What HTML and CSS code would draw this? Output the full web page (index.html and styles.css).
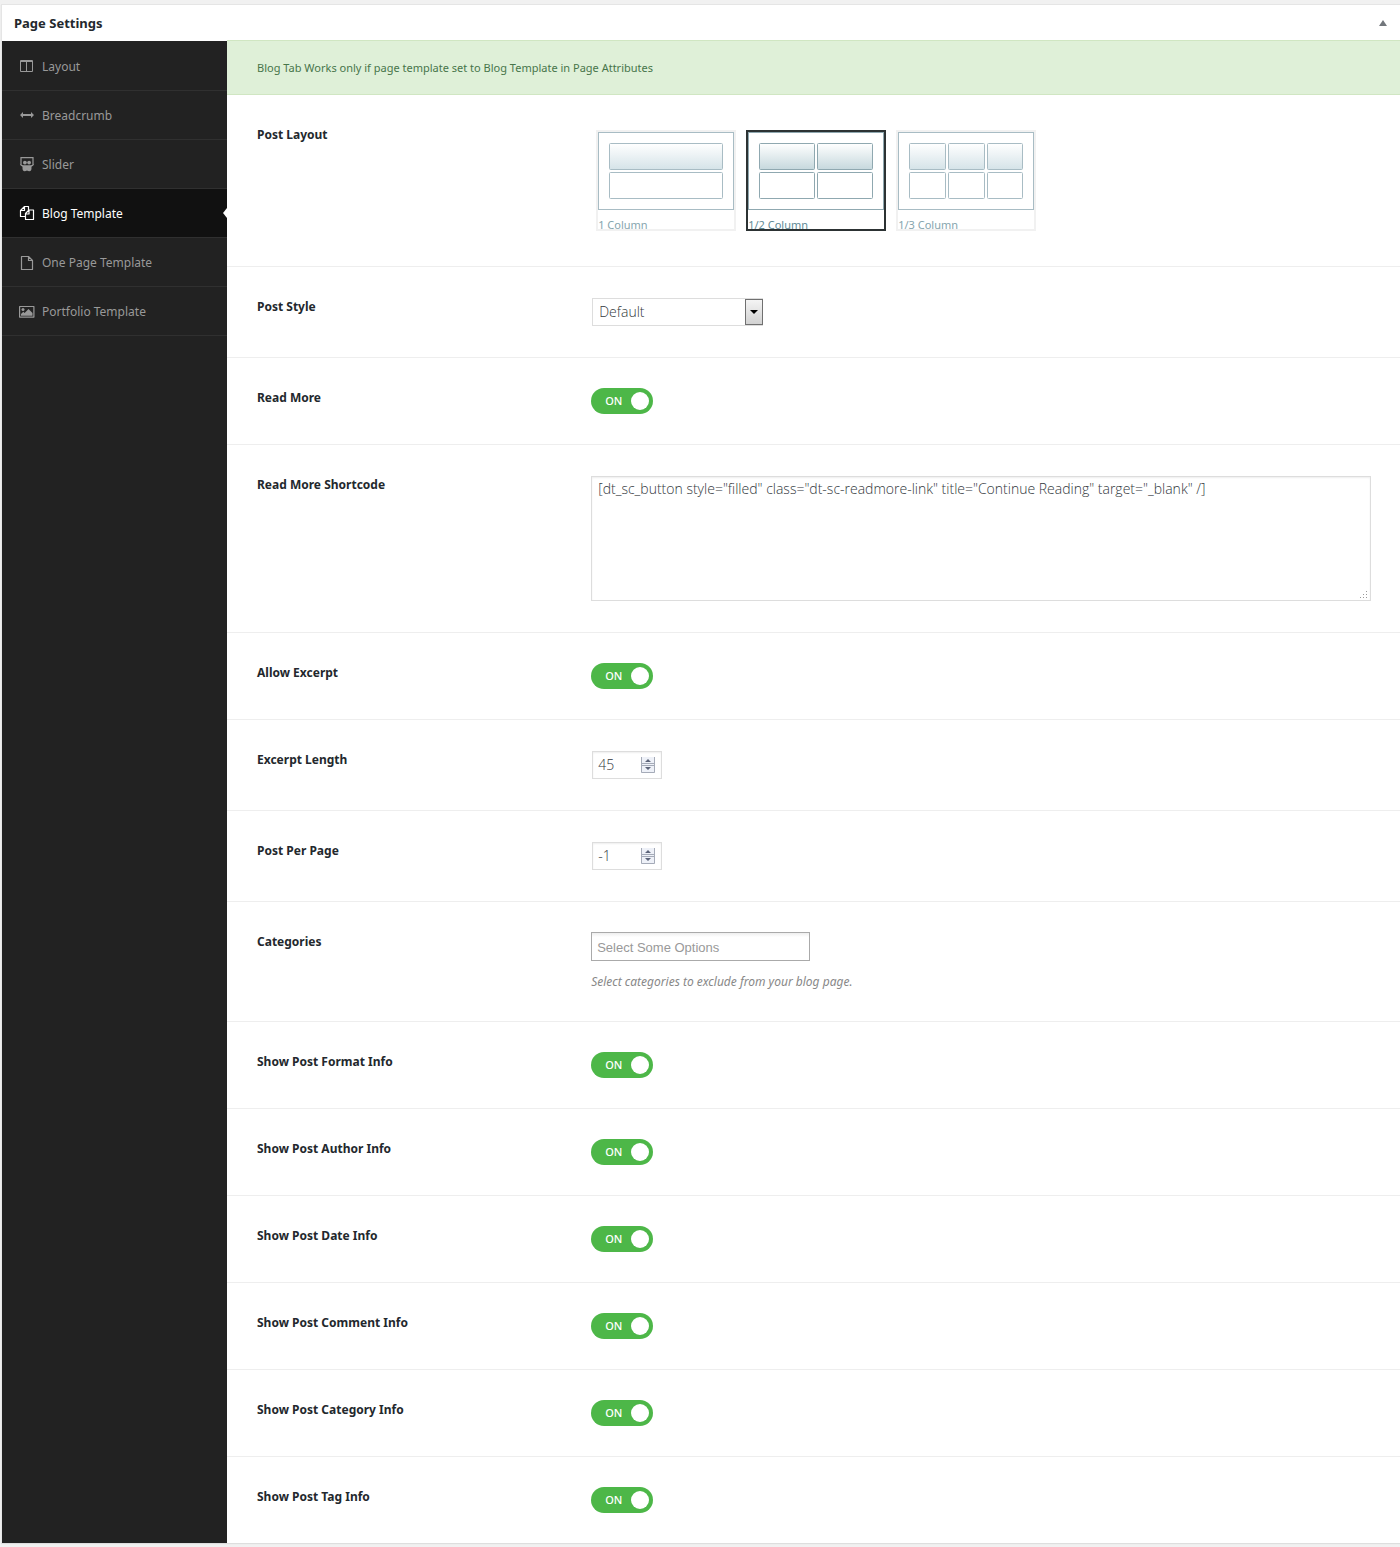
FILE: index.html
```html
<!DOCTYPE html>
<html lang="en">
<head>
<meta charset="utf-8">
<meta name="viewport" content="width=device-width, initial-scale=1">
<title>Page Settings</title>
<link rel="stylesheet" href="styles.css">
</head>
<body>
<main class="panel">
  <header class="panel-header">
    <h1 class="panel-title">Page Settings</h1>
    <button class="panel-collapse" type="button" aria-label="Collapse panel">
      <svg width="8" height="6" viewBox="0 0 8 6" aria-hidden="true"><path d="M4 0 8 6H0z" fill="#72777c"/></svg>
    </button>
  </header>
  <div class="panel-body">
    <nav class="tabs" aria-label="Settings sections">
      <a class="tab" href="#layout">
        <svg class="tab-icon" viewBox="0 0 16 16" aria-hidden="true"><path fill="currentColor" fill-rule="evenodd" d="M2 2h11q1 0 1 1v10q0 1-1 1H2q-1 0-1-1V3q0-1 1-1zm0 2v9h5V4zm6 0v9h5V4z"/></svg>
        Layout
      </a>
      <a class="tab" href="#breadcrumb">
        <svg class="tab-icon" viewBox="0 0 16 16" aria-hidden="true"><path fill="currentColor" d="M1 8l3-3v2h8V5l3 3-3 3V9H4v2z"/></svg>
        Breadcrumb
      </a>
      <a class="tab" href="#slider">
        <svg class="tab-icon" viewBox="0 0 16 16" aria-hidden="true"><path fill="none" stroke="currentColor" stroke-width="1.200" d="M2 9V1.600h12V9"/><circle cx="5.900" cy="6.600" r="1.900" fill="currentColor"/><circle cx="10.100" cy="6.600" r="1.900" fill="currentColor"/><path fill="currentColor" d="M.8 7.700q1.500 1.600 6 1.600H8h1.200q4.500 0 6-1.600-.4 1.900-2.700 3 .3 4.600-2.200 4.600-1.300 0-2.300-.7-1 .7-2.300.7-2.500 0-2.200-4.600Q1.200 9.600.8 7.700z"/></svg>
        Slider
      </a>
      <a class="tab tab-active" href="#blog" aria-current="page">
        <svg class="tab-icon" viewBox="0 0 16 16" aria-hidden="true"><path fill="none" stroke="currentColor" stroke-width="1.200" stroke-linejoin="round" d="M6.500 11.500h-5V5.500l4-4h4V5M1.500 5.500h4v-4M10 5h4.500v9.500h-8V8.500L10 5v4H6.500"/></svg>
        Blog Template
      </a>
      <a class="tab" href="#onepage">
        <svg class="tab-icon" viewBox="0 0 16 16" aria-hidden="true"><path fill="none" stroke="currentColor" stroke-width="1.200" stroke-linejoin="round" d="M2.500 2.500h7l4 4v9h-11zM9.500 2.500v4h4"/></svg>
        One Page Template
      </a>
      <a class="tab" href="#portfolio">
        <svg class="tab-icon" viewBox="0 0 16 16" aria-hidden="true"><path fill="none" stroke="currentColor" stroke-width="1.200" stroke-linejoin="round" d="M.6 3.500h14.300v10.600H.6z"/><circle cx="4" cy="6.600" r="1.500" fill="currentColor"/><path fill="currentColor" d="M2 12.800v-1.900l2.300-2.200 1.300 1.200L9.500 6l4 4v2.800z"/></svg>
        Portfolio Template
      </a>
    </nav>

    <form class="settings">
      <p class="notice">Blog Tab Works only if page template set to Blog Template in Page Attributes</p>

      <div class="row">
        <span class="label" id="post-layout-label">Post Layout</span>
        <div class="layouts" role="radiogroup" aria-labelledby="post-layout-label">
          <label class="layout">
            <input class="cover-input" type="radio" name="post-layout">
            <svg class="layout-picture" viewBox="0 0 136 78" aria-hidden="true">
              <defs><linearGradient id="shade" x1="0" y1="0" x2="0" y2="1"><stop offset="0" stop-color="#fff"/><stop offset="1" stop-color="#d5e3e8"/></linearGradient></defs>
              <g fill="none" stroke="#a8bcc4"><rect x=".5" y=".5" width="135" height="77"/><rect x="11.500" y="11.500" width="113" height="26" rx="1" fill="url(#shade)"/><rect x="11.500" y="40.500" width="113" height="26" rx="1"/></g>
            </svg>
            <span class="layout-name">1 Column</span>
          </label>
          <label class="layout">
            <input class="cover-input" type="radio" name="post-layout" checked>
            <svg class="layout-picture" viewBox="0 0 136 78" aria-hidden="true">
              <defs><linearGradient id="shade-selected" x1="0" y1="0" x2="0" y2="1"><stop offset="0" stop-color="#fff"/><stop offset="1" stop-color="#c6d8dd"/></linearGradient></defs>
              <g fill="none" stroke="#8fa8b0"><rect x=".5" y=".5" width="135" height="77"/><g fill="url(#shade-selected)"><rect x="11.500" y="11.500" width="55" height="26" rx="1"/><rect x="69.500" y="11.500" width="55" height="26" rx="1"/></g><rect x="11.500" y="40.500" width="55" height="26" rx="1"/><rect x="69.500" y="40.500" width="55" height="26" rx="1"/></g>
            </svg>
            <span class="layout-name">1/2 Column</span>
          </label>
          <label class="layout">
            <input class="cover-input" type="radio" name="post-layout">
            <svg class="layout-picture" viewBox="0 0 136 78" aria-hidden="true">
              <g fill="none" stroke="#a8bcc4"><rect x=".5" y=".5" width="135" height="77"/><g fill="url(#shade)"><rect x="11.500" y="11.500" width="36" height="26" rx="1"/><rect x="50.500" y="11.500" width="36" height="26" rx="1"/><rect x="89.500" y="11.500" width="35" height="26" rx="1"/></g><rect x="11.500" y="40.500" width="36" height="26" rx="1"/><rect x="50.500" y="40.500" width="36" height="26" rx="1"/><rect x="89.500" y="40.500" width="35" height="26" rx="1"/></g>
            </svg>
            <span class="layout-name">1/3 Column</span>
          </label>
        </div>
      </div>

      <div class="row">
        <label class="label" for="post-style">Post Style</label>
        <div class="field">
          <div class="select">
            <select class="select-input" id="post-style"><option>Default</option></select>
            <span class="select-arrow" aria-hidden="true"><svg width="8" height="4" viewBox="0 0 8 4"><path d="M0 0h8L4 4z"/></svg></span>
          </div>
        </div>
      </div>

      <div class="row">
        <label class="label" for="read-more">Read More</label>
        <div class="toggle"><input class="cover-input" id="read-more" type="checkbox" role="switch" checked><span class="toggle-text">ON</span><span class="toggle-knob"></span></div>
      </div>

      <div class="row">
        <label class="label" for="shortcode">Read More Shortcode</label>
        <div class="field textarea">
          <textarea class="textarea-input" id="shortcode">[dt_sc_button style="filled" class="dt-sc-readmore-link" title="Continue Reading" target="_blank" /]</textarea>
          <svg class="textarea-grip" width="8" height="8" viewBox="0 0 8 8" aria-hidden="true"><path fill="#999" d="M6 0h1v1H6zM3 3h1v1H3zM6 3h1v1H6zM0 6h1v1H0zM3 6h1v1H3zM6 6h1v1H6z"/></svg>
        </div>
      </div>

      <div class="row">
        <label class="label" for="allow-excerpt">Allow Excerpt</label>
        <div class="toggle"><input class="cover-input" id="allow-excerpt" type="checkbox" role="switch" checked><span class="toggle-text">ON</span><span class="toggle-knob"></span></div>
      </div>

      <div class="row">
        <label class="label" for="excerpt-length">Excerpt Length</label>
        <div class="field">
          <div class="number">
            <input class="number-input" id="excerpt-length" type="number" value="45">
            <svg class="number-steps" width="15" height="18" viewBox="0 0 15 18" aria-hidden="true"><path fill="#eef1f8" d="M0 1h14v16H0z"/><path fill="none" stroke="#a5abb8" d="M.5 1v15.500h13V1M0 7.500h14M0 9.500h14"/><path fill="#5c6479" d="M7 3l3 3H4zM7 14l3-3H4z"/></svg>
          </div>
        </div>
      </div>

      <div class="row">
        <label class="label" for="per-page">Post Per Page</label>
        <div class="field">
          <div class="number">
            <input class="number-input" id="per-page" type="number" value="-1">
            <svg class="number-steps" width="15" height="18" viewBox="0 0 15 18" aria-hidden="true"><path fill="#eef1f8" d="M0 1h14v16H0z"/><path fill="none" stroke="#a5abb8" d="M.5 1v15.500h13V1M0 7.500h14M0 9.500h14"/><path fill="#5c6479" d="M7 3l3 3H4zM7 14l3-3H4z"/></svg>
          </div>
        </div>
      </div>

      <div class="row">
        <label class="label" for="categories">Categories</label>
        <div class="categories">
          <input class="categories-input" id="categories" type="text" placeholder="Select Some Options">
          <p class="hint">Select categories to exclude from your blog page.</p>
        </div>
      </div>

      <div class="row">
        <label class="label" for="show-format">Show Post Format Info</label>
        <div class="toggle"><input class="cover-input" id="show-format" type="checkbox" role="switch" checked><span class="toggle-text">ON</span><span class="toggle-knob"></span></div>
      </div>
      <div class="row">
        <label class="label" for="show-author">Show Post Author Info</label>
        <div class="toggle"><input class="cover-input" id="show-author" type="checkbox" role="switch" checked><span class="toggle-text">ON</span><span class="toggle-knob"></span></div>
      </div>
      <div class="row">
        <label class="label" for="show-date">Show Post Date Info</label>
        <div class="toggle"><input class="cover-input" id="show-date" type="checkbox" role="switch" checked><span class="toggle-text">ON</span><span class="toggle-knob"></span></div>
      </div>
      <div class="row">
        <label class="label" for="show-comment">Show Post Comment Info</label>
        <div class="toggle"><input class="cover-input" id="show-comment" type="checkbox" role="switch" checked><span class="toggle-text">ON</span><span class="toggle-knob"></span></div>
      </div>
      <div class="row">
        <label class="label" for="show-category">Show Post Category Info</label>
        <div class="toggle"><input class="cover-input" id="show-category" type="checkbox" role="switch" checked><span class="toggle-text">ON</span><span class="toggle-knob"></span></div>
      </div>
      <div class="row">
        <label class="label" for="show-tag">Show Post Tag Info</label>
        <div class="toggle"><input class="cover-input" id="show-tag" type="checkbox" role="switch" checked><span class="toggle-text">ON</span><span class="toggle-knob"></span></div>
      </div>
    </form>
  </div>
</main>
</body>
</html>
```

FILE: styles.css
```css
*,
*::before,
*::after {
  box-sizing: border-box;
}

body {
  margin: 0;
  padding: 4px 0 4px 1px;
  background: #f1f1f1;
  color: #23282d;
  font: 13px/18px "Noto Sans", "Open Sans", sans-serif;
}

.panel {
  background: #fff;
  border: solid #e5e5e5;
  border-width: 1px 0 0 1px;
  box-shadow: 0 1px 1px rgba(0, 0, 0, 0.08);
}

.panel-header {
  display: flex;
  align-items: center;
  justify-content: space-between;
  height: 36px;
  padding: 0 13px 0 12px;
}

.panel-title {
  margin: 0;
  font-size: 13px;
  font-weight: 700;
}

.panel-collapse {
  display: flex;
  padding: 0;
  border: 0;
  background: none;
}

.panel-body {
  display: flex;
}

/* Sidebar */

.tabs {
  flex: 0 0 225px;
  padding-top: 1px;
  background: #222;
}

.tab {
  position: relative;
  display: flex;
  align-items: center;
  gap: 7px;
  height: 49px;
  padding: 2px 0 0 17px;
  border-bottom: 1px solid #303030;
  color: #999;
  font-size: 12px;
  text-decoration: none;
}

.tab-active {
  background: #111;
  color: #fff;
}

.tab-active::after {
  content: "";
  position: absolute;
  top: 50%;
  right: 0;
  border: 5px solid transparent;
  border-right: 4px solid #fff;
  border-left: 0;
  transform: translateY(-50%);
}

.tab-icon {
  width: 16px;
  height: 16px;
  margin-bottom: 2px;
}

/* Settings */

.settings {
  flex: 1;
  min-width: 0;
}

.notice {
  margin: -1px 0 0;
  padding: 18px 30px 17px;
  border: solid #d0e6c2;
  border-width: 1px 0;
  background: #dff0d8;
  color: #47754a;
  font-size: 11px;
}

.row {
  display: grid;
  grid-template-columns: 3fr 7fr;
  align-items: start;
  padding: 30px 29px 30px 30px;
}

.row + .row {
  border-top: 1px solid #eee;
}

.label {
  font-size: 12px;
  font-weight: 700;
  line-height: 20px;
}

.field {
  padding: 1px 0;
}

.cover-input {
  position: absolute;
  inset: 0;
  width: 100%;
  height: 100%;
  margin: 0;
  opacity: 0;
  cursor: pointer;
}

.layouts {
  display: flex;
  gap: 10px;
  padding: 5px;
}

.layout {
  position: relative;
  width: 140px;
  height: 101px;
  overflow: hidden;
  border: 2px solid #f1f1f1;
  color: #86a5ae;
  font-size: 11px;
}

.layout:has(:checked) {
  border-color: #2c3233;
  color: #5f8a96;
}

.layout-picture {
  display: block;
  width: 136px;
  height: 78px;
}

.layout-name {
  display: block;
  padding-top: 6px;
}

.select {
  position: relative;
  width: 171px;
  margin-left: 1px;
}

.select-input {
  display: block;
  width: 100%;
  height: 28px;
  padding: 0 24px 0 6px;
  border: 1px solid #ddd;
  border-radius: 0;
  appearance: none;
  background: #fff;
  color: #32373c;
  font: 300 14px/18px "Open Sans", "Noto Sans", sans-serif;
}

.select-arrow {
  position: absolute;
  top: 1px;
  right: 0;
  bottom: 1px;
  display: flex;
  align-items: center;
  justify-content: center;
  width: 18px;
  border: 1px solid #707070;
  background: linear-gradient(#f4f4f4, #d2d2d2);
  pointer-events: none;
}

.toggle {
  position: relative;
  display: flex;
  align-items: center;
  justify-content: space-between;
  width: 62px;
  height: 26px;
  padding: 0 4px 0 14px;
  border-radius: 13px;
  background: #4db748;
  color: #fff;
  font-size: 11px;
  font-weight: 500;
}

.toggle-knob {
  width: 18px;
  height: 18px;
  border-radius: 50%;
  background: #fff;
}

.textarea {
  position: relative;
}

.textarea-input {
  display: block;
  width: 100%;
  height: 125px;
  padding: 3px 6px;
  border: 1px solid #ddd;
  box-shadow: inset 0 1px 2px rgba(0, 0, 0, 0.07);
  color: #32373c;
  font: 300 14px/18px "Open Sans", "Noto Sans", sans-serif;
  resize: none;
}

.textarea-grip {
  position: absolute;
  right: 3px;
  bottom: 3px;
  pointer-events: none;
}

.number {
  display: flex;
  align-items: center;
  width: 70px;
  height: 28px;
  margin-left: 1px;
  padding: 0 5px;
  border: 1px solid #ddd;
  box-shadow: inset 0 1px 2px rgba(0, 0, 0, 0.07);
}

.number-input {
  flex: 1;
  min-width: 0;
  padding: 0;
  border: 0;
  appearance: textfield;
  background: none;
  color: #32373c;
  font: 300 14px/18px "Open Sans", "Noto Sans", sans-serif;
}

.number-input::-webkit-inner-spin-button {
  display: none;
}

.categories-input {
  display: block;
  width: 219px;
  height: 29px;
  padding: 2px 5px 0;
  border: 1px solid #aaa;
  background: linear-gradient(#eee, #fff 15%);
  font: 13px/18px "Liberation Sans", sans-serif;
}

.categories-input::placeholder {
  color: #999;
}

.hint {
  margin: 11px 0 0;
  color: #888;
  font-size: 12px;
  font-style: italic;
  line-height: 19px;
}
```
